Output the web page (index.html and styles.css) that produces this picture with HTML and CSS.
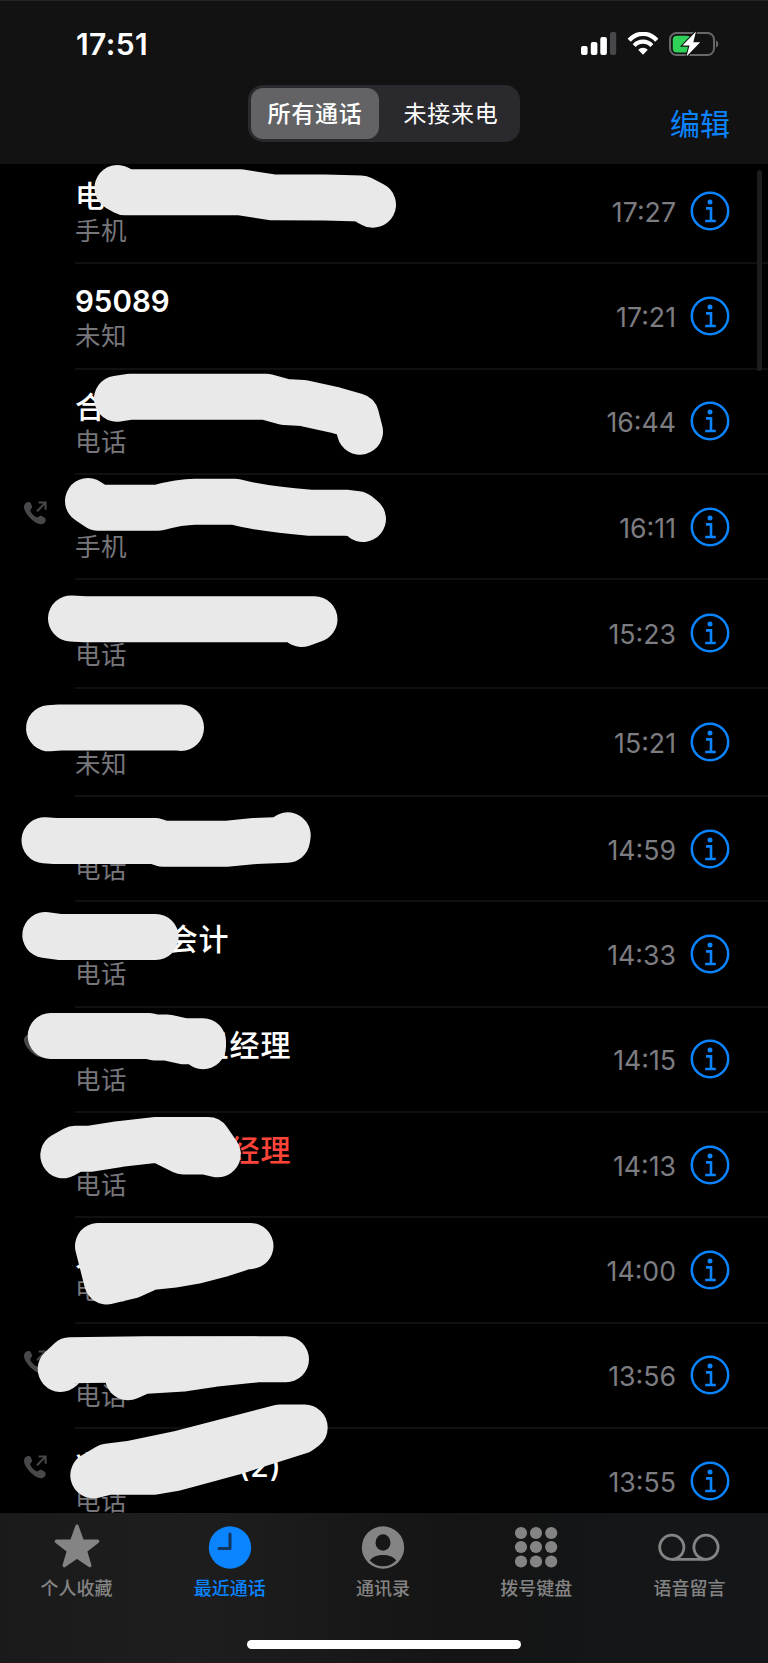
FILE: index.html
```
<!DOCTYPE html>
<html lang="zh-CN">
<head>
    <meta charset="utf-8"/>
    <title>最近通话</title>
    <link rel="stylesheet" href="styles.css">
</head>
<body>
    <svg class="symbols" width="0" height="0">
        <symbol id="info" viewBox="0 0 40 40">
            <circle cx="20" cy="20" r="18.2" fill="none" stroke="#0a84ff" stroke-width="2.5"/>
            <circle cx="20" cy="10.9" r="2.5" fill="#0a84ff"/>
            <path d="M16 17.4H21V30M15.2 30H25.8" fill="none" stroke="#0a84ff" stroke-width="2.6"/>
        </symbol>
        <symbol id="outgoing" viewBox="0 0 24 24">
            <path d="M2.2 2.6C3.6.9 6.5.2 7.8 2.2L9 5.2C9.6 7 7.4 8 7.2 9.2C7.5 11.5 11.6 15.8 14.2 16.4C15.6 16.2 16.6 14.2 18.4 14.8L21.6 16.8C23.6 18.3 22.8 20.9 21 22.2C17 25.6 9.8 20.4 5.8 15.6C2.2 11.2-.8 6.2 2.2 2.6Z" fill="#48484a"/>
            <path d="M14 10.3L22 2.1M15.6 1.6H22.6V8.8" fill="none" stroke="#48484a" stroke-width="2"/>
        </symbol>
    </svg>

    <div class="phone">
        <header class="header">
            <div class="status-bar">
                <span class="clock">17:51</span>
                <div class="status-icons">
                    <svg width="36" height="24" viewBox="0 0 36 24">
                        <rect x="0" y="14" width="6.6" height="9" rx="2" fill="#fff"/>
                        <rect x="9.8" y="10" width="6.6" height="13" rx="2" fill="#fff"/>
                        <rect x="19.3" y="5" width="6.6" height="18" rx="2" fill="#fff"/>
                        <rect x="29" y="0" width="6.2" height="23" rx="2" fill="#48484a"/>
                    </svg>
                    <svg class="wifi" width="32" height="24" viewBox="0 0 32 24">
                        <path d="M2.2 8.2C10-.2 22-.2 29.8 8.2" fill="none" stroke="#fff" stroke-width="4.4"/>
                        <path d="M7.2 13.6C12 8.4 20 8.4 24.8 13.6" fill="none" stroke="#fff" stroke-width="4.2"/>
                        <path d="M11.2 17.8C13.8 15 18.2 15 20.8 17.8L16 22.8Z" fill="#fff"/>
                    </svg>
                    <svg width="50" height="26" viewBox="0 0 50 26">
                        <rect x="1" y="2" width="44" height="22" rx="6.5" fill="none" stroke="#68686a" stroke-width="2"/>
                        <rect x="3.8" y="4.8" width="18" height="16.6" rx="4" fill="#30d158"/>
                        <path d="M47 9.5C50 10.5 50 15.5 47 16.5Z" fill="#68686a"/>
                        <path d="M27 .5L13.5 14.6H20.5L17.5 25.5L31.2 11.2H24.3Z" fill="#fff" stroke="#121213" stroke-width="2.2" paint-order="stroke"/>
                    </svg>
                </div>
            </div>
            <div class="nav">
                <div class="segment">
                    <span class="segment-item active">所有通话</span>
                    <span class="segment-item">未接来电</span>
                </div>
                <a class="edit">编辑</a>
            </div>
        </header>

        <main class="calls">
            <div class="call">
                <div class="kind"></div>
                <div class="who"><div class="name">电</div><div class="label">手机</div></div>
                <span class="time">17:27</span>
                <svg class="info"><use href="#info"/></svg>
            </div>
            <div class="call">
                <div class="kind"></div>
                <div class="who"><div class="name number">95089</div><div class="label">未知</div></div>
                <span class="time">17:21</span>
                <svg class="info"><use href="#info"/></svg>
            </div>
            <div class="call">
                <div class="kind"></div>
                <div class="who"><div class="name">合</div><div class="label">电话</div></div>
                <span class="time">16:44</span>
                <svg class="info"><use href="#info"/></svg>
            </div>
            <div class="call">
                <div class="kind"><svg class="outgoing"><use href="#outgoing"/></svg></div>
                <div class="who"><div class="name"></div><div class="label">手机</div></div>
                <span class="time">16:11</span>
                <svg class="info"><use href="#info"/></svg>
            </div>
            <div class="call tall">
                <div class="kind"></div>
                <div class="who"><div class="name"></div><div class="label">电话</div></div>
                <span class="time">15:23</span>
                <svg class="info"><use href="#info"/></svg>
            </div>
            <div class="call tall">
                <div class="kind"></div>
                <div class="who"><div class="name"></div><div class="label">未知</div></div>
                <span class="time">15:21</span>
                <svg class="info"><use href="#info"/></svg>
            </div>
            <div class="call">
                <div class="kind"></div>
                <div class="who"><div class="name"></div><div class="label">电话</div></div>
                <span class="time">14:59</span>
                <svg class="info"><use href="#info"/></svg>
            </div>
            <div class="call">
                <div class="kind"></div>
                <div class="who"><div class="name">　　　会计</div><div class="label">电话</div></div>
                <span class="time">14:33</span>
                <svg class="info"><use href="#info"/></svg>
            </div>
            <div class="call">
                <div class="kind"><svg class="outgoing"><use href="#outgoing"/></svg></div>
                <div class="who"><div class="name">　　　　租经理</div><div class="label">电话</div></div>
                <span class="time">14:15</span>
                <svg class="info"><use href="#info"/></svg>
            </div>
            <div class="call missed">
                <div class="kind"></div>
                <div class="who"><div class="name">　　　　　经理</div><div class="label">电话</div></div>
                <span class="time">14:13</span>
                <svg class="info"><use href="#info"/></svg>
            </div>
            <div class="call">
                <div class="kind"></div>
                <div class="who"><div class="name">人</div><div class="label">电话</div></div>
                <span class="time">14:00</span>
                <svg class="info"><use href="#info"/></svg>
            </div>
            <div class="call">
                <div class="kind"><svg class="outgoing"><use href="#outgoing"/></svg></div>
                <div class="who"><div class="name"></div><div class="label">电话</div></div>
                <span class="time">13:56</span>
                <svg class="info"><use href="#info"/></svg>
            </div>
            <div class="call">
                <div class="kind"><svg class="outgoing"><use href="#outgoing"/></svg></div>
                <div class="who"><div class="name">兴　　　　 (2)</div><div class="label">电话</div></div>
                <span class="time">13:55</span>
                <svg class="info"><use href="#info"/></svg>
            </div>
        </main>

        <div class="scrollbar"></div>

        <!-- 涂抹遮盖 -->
        <svg class="marker" width="768" height="1513" viewBox="0 0 768 1513">
            <path d="M117.5 188L125 192.3H240L272 197.2L325 197.6L361 198.5L373 204.7"/>
            <path d="M117 398.7L130 396.8H266L285 402L303 403L335 410L356 416L360 431.7"/>
            <path d="M88 501L98 507.7H158Q180 502 195 501.8H235Q262 509 310 512.7H345L357 514L363 519"/>
            <path d="M71 618.5L85 619.3H314.5L301.5 624"/>
            <path d="M49 728.3L60 727.5H181V728"/>
            <path d="M44.5 840.3L55 841H155L163 843.7H228L255 841L287 839.7L287.7 835.3"/>
            <path d="M45.3 935L60 937H155.7"/>
            <path d="M50.7 1036H149L155 1037.5H167L184 1041.2H203V1046.3"/>
            <path class="fill" d="M63.3 1155.3L75 1148.7H90L120 1144L155 1140H208L217.8 1154.3L206 1151.5H183L160 1140"/>
            <path class="fill" d="M98 1246H250.5L245 1246.5L222 1254L197 1260.5L174 1264.5L150 1267L130 1276L107 1281.5Z"/>
            <path d="M60.7 1369L70 1360.3L145 1359.3H286"/>
            <path class="fill" d="M128 1360V1377.3L142 1371L183 1368.5L213 1364L255 1359.5Z"/>
            <path class="fill" d="M93.3 1475.3L108 1466.5L132 1463.5L180 1453.5L280 1427.5H304.7L300 1431L234 1452L175 1468L153 1471.7H108Z"/>
        </svg>

        <footer class="tab-bar">
            <div class="tab">
                <svg width="48" height="48" viewBox="0 0 48 48">
                    <path d="M24 3.2L29.2 17.9L44.6 18.3L32.4 27.8L36.8 42.6L24 33.8L11.2 42.6L15.6 27.8L3.4 18.3L18.8 17.9Z" fill="#848484" stroke="#848484" stroke-width="3.4" stroke-linejoin="round"/>
                </svg>
                <span>个人收藏</span>
            </div>
            <div class="tab active">
                <svg width="48" height="48" viewBox="0 0 48 48">
                    <circle cx="24" cy="24.5" r="21.2" fill="#0a84ff"/>
                    <path d="M24 11V25.5H13" fill="none" stroke="#12345c" stroke-width="3" stroke-linecap="round" stroke-linejoin="round"/>
                </svg>
                <span>最近通话</span>
            </div>
            <div class="tab">
                <svg width="48" height="48" viewBox="0 0 48 48">
                    <circle cx="24" cy="24.5" r="21.2" fill="#848484"/>
                    <ellipse cx="24" cy="19.5" rx="7.5" ry="8.3" fill="#171717"/>
                    <path d="M10.8 37.5C16 30.3 32 30.3 37.2 37.5C30 45.3 18 45.3 10.8 37.5Z" fill="#171717"/>
                </svg>
                <span>通讯录</span>
            </div>
            <div class="tab">
                <svg width="48" height="48" viewBox="0 0 48 48" fill="#848484">
                    <circle cx="9" cy="10" r="6.1"/><circle cx="24" cy="10" r="6.1"/><circle cx="39.2" cy="10" r="6.1"/>
                    <circle cx="9" cy="24" r="6.1"/><circle cx="24" cy="24" r="6.1"/><circle cx="39.2" cy="24" r="6.1"/>
                    <circle cx="9" cy="38.5" r="6.1"/><circle cx="24" cy="38.5" r="6.1"/><circle cx="39.2" cy="38.5" r="6.1"/>
                </svg>
                <span>拨号键盘</span>
            </div>
            <div class="tab">
                <svg width="64" height="48" viewBox="0 0 64 48" fill="none" stroke="#848484" stroke-width="2.8">
                    <circle cx="14.8" cy="24.3" r="12.1"/>
                    <circle cx="49" cy="24.3" r="12.1"/>
                    <path d="M14.8 36.4H49"/>
                </svg>
                <span>语音留言</span>
            </div>
        </footer>
        <div class="home-indicator"></div>
    </div>
</body>
</html>
```
FILE: styles.css
```
* {
    box-sizing: border-box;
}

body {
    margin: 0;
    background: #000;
    color: #fff;
    font-family: Inter, 'Noto Sans CJK SC', sans-serif;
}

.symbols {
    position: absolute;
}

.phone {
    position: relative;
    width: 768px;
    height: 1663px;
    overflow: hidden;
    display: flex;
    flex-direction: column;
}

.header {
    position: relative;
    z-index: 1;
    flex: none;
    height: 164px;
    background: #121213;
    border-top: 1px solid #242425;
}

.status-bar {
    display: flex;
    justify-content: space-between;
    align-items: center;
    height: 84px;
    padding: 2px 49px 0 76px;
}

.clock {
    font-size: 30px;
    font-weight: 600;
    letter-spacing: 0.4px;
}

.status-icons {
    display: flex;
    align-items: center;
}

.wifi {
    margin: 0 10px;
}

.nav {
    display: flex;
    padding: 0 38px 0 248px;
    justify-content: space-between;
    align-items: flex-start;
}

.segment {
    display: flex;
    width: 272px;
    height: 57px;
    padding: 3px;
    border-radius: 15px;
    background: #2a2a2e;
}

.segment-item {
    flex: 1;
    height: 51px;
    padding-left: 6px;
    line-height: 53px;
    text-align: center;
    font-size: 23px;
    letter-spacing: 0.7px;
    border-radius: 12px;
}

.segment-item.active {
    flex: none;
    width: 128px;
    padding-left: 0;
    background: #636366;
    font-weight: 500;
}

.edit {
    margin-top: 17px;
    font-size: 30px;
    line-height: 44px;
    color: #0a84ff;
}

.calls {
    flex: none;
    height: 1355px;
    margin-top: -6px;
    overflow: hidden;
}

.call {
    position: relative;
    display: flex;
    align-items: center;
    height: 105.3px;
    padding-right: 38px;
}

/* 分隔线从文字处开始 */
.call::after {
    content: '';
    position: absolute;
    left: 75px;
    right: 0;
    bottom: -1px;
    height: 2px;
    background: #101011;
}

.call.tall {
    height: 108.5px;
}

.kind {
    width: 75px;
    height: 100%;
    padding: 27px 0 0 23px;
}

.outgoing {
    display: block;
    width: 24px;
    height: 24px;
}

.who {
    flex: 1;
    height: 100%;
    padding-top: 20px;
}

.tall .who {
    padding-top: 23px;
}

.name {
    height: 37px;
    line-height: 37px;
    font-size: 30px;
    font-weight: 500;
    letter-spacing: 0.9px;
    white-space: pre;
}

.name.number {
    font-weight: 600;
    font-size: 29.5px;
    letter-spacing: 0;
}

.missed .name {
    color: #ff453a;
}

.label {
    line-height: 32px;
    font-size: 25.5px;
    letter-spacing: 0.6px;
    color: #76767b;
}

.time {
    font-size: 26.7px;
    color: #7c7c81;
    margin-right: 14px;
    padding-top: 2px;
}

.info {
    width: 40px;
    height: 40px;
}

.scrollbar {
    position: absolute;
    top: 170px;
    right: 6px;
    width: 5px;
    height: 201px;
    border-radius: 3px;
    background: #1d1d1e;
}

.marker {
    position: absolute;
    top: 0;
    left: 0;
    fill: none;
    stroke: #e9e9e9;
    stroke-width: 46;
    stroke-linecap: round;
    stroke-linejoin: round;
}

.marker .fill {
    fill: #e9e9e9;
}

.tab-bar {
    position: relative;
    display: flex;
    flex: 1;
    padding: 10px 2px 0 0;
    background: linear-gradient(90deg, #1a1a1a, #1e1e1e 25%, #141414 60%, #14171a);
}

.tab {
    flex: 1;
    display: flex;
    flex-direction: column;
    align-items: center;
    font-size: 18px;
    line-height: 28px;
    color: #848484;
}

.tab span {
    margin-top: 4px;
    font-weight: 500;
}

.tab.active {
    color: #0a84ff;
}

.home-indicator {
    position: absolute;
    left: 247px;
    bottom: 14px;
    width: 274px;
    height: 9px;
    border-radius: 5px;
    background: #fff;
}
```
